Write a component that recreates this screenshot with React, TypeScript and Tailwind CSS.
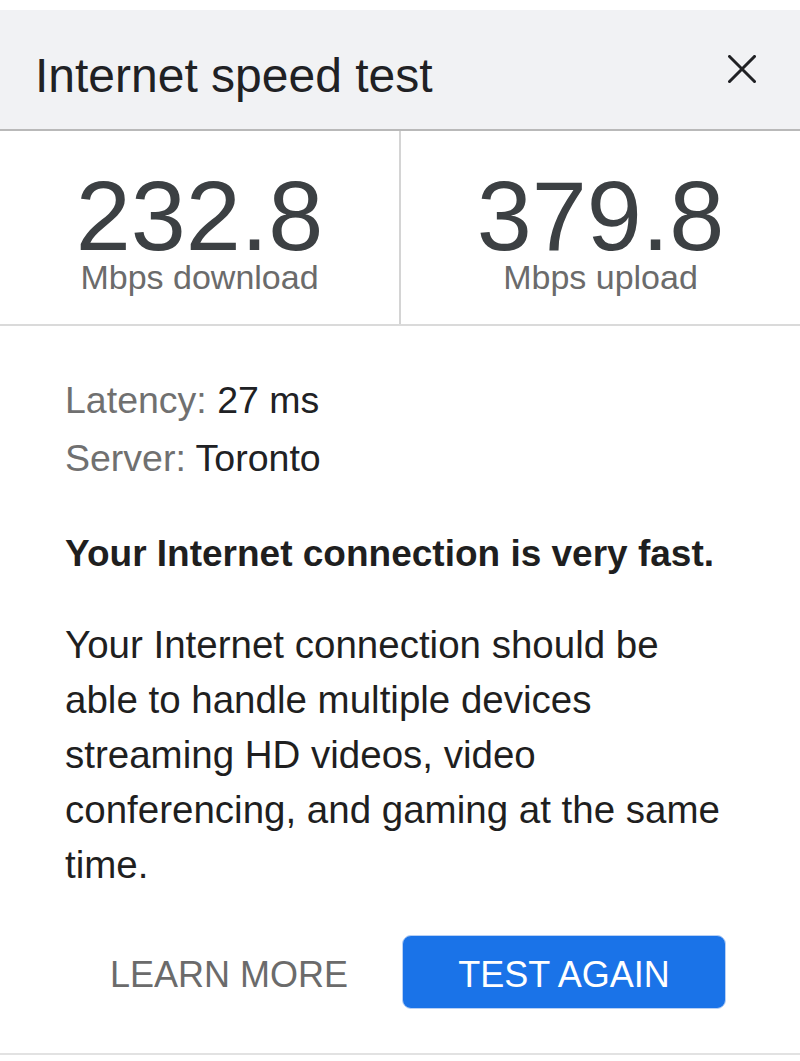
import React from "react";

const font = { fontFamily: '"Liberation Sans", Arial, sans-serif' };

function CloseIcon() {
  return (
    <svg width="28" height="28" viewBox="0 0 28 28" className="mt-[45px]">
      <path d="M1.5 1.5 L26.5 26.5 M26.5 1.5 L1.5 26.5" stroke="#202124" strokeWidth="3" strokeLinecap="square" />
    </svg>
  );
}

function Stat({ value, label }: { value: string; label: string }) {
  return (
    <div className="flex-1 flex flex-col items-center pt-[43px]">
      <div className="text-[99px] leading-[84px] text-[#3c4043]">{value}</div>
      <div className="mt-[2px] text-[34px] leading-none text-[#6b6b6b]">{label}</div>
    </div>
  );
}

export default function App() {
  return (
    <div className="w-[800px] h-[1061px] bg-white pt-[10px]" style={font}>
      {/* header */}
      <div className="h-[121px] bg-[#f1f2f4] border-b-2 border-[#b9b9b9] flex items-start justify-between pl-[35px] pr-[44px]">
        <h1 className="mt-[42px] text-[48px] leading-none text-[#202124]">Internet speed test</h1>
        <CloseIcon />
      </div>

      {/* speeds */}
      <div className="flex h-[195px] border-b-2 border-[#dadada]">
        <Stat value="232.8" label="Mbps download" />
        <div className="w-[2px] bg-[#d4d4d4]" />
        <Stat value="379.8" label="Mbps upload" />
      </div>

      {/* details */}
      <div className="pl-[65px] pt-[45px]">
        <div className="text-[37.5px] leading-[58px]">
          <div>
            <span className="text-[#707070]">Latency: </span>
            <span className="text-[#202124]">27 ms</span>
          </div>
          <div>
            <span className="text-[#707070]">Server: </span>
            <span className="text-[#202124]">Toronto</span>
          </div>
        </div>

        <p className="mt-[38px] text-[37px] leading-[58px] font-bold text-[#1f1f1f]">
          Your Internet connection is very fast.
        </p>

        <p className="mt-[34px] w-[668px] text-[38.5px] leading-[55px] text-[#1f1f1f]">
          Your Internet connection should be able to handle multiple devices streaming HD videos, video conferencing, and gaming at the same time.
        </p>
      </div>

      {/* actions */}
      <div className="flex justify-end items-center pr-[74px] mt-[43px]">
        <button className="h-[74px] pr-[54px] pt-[6px] text-[36px] text-[#6b6b6b] bg-white">LEARN MORE</button>
        <button className="h-[74px] w-[324px] pt-[6px] text-[36px] text-white bg-[#1a73e8] rounded-[9px] border border-[#b7d0f5]">
          TEST AGAIN
        </button>
      </div>

      <div className="mt-[44px] h-[2px] bg-[#e2e2e2]" />
    </div>
  );
}
